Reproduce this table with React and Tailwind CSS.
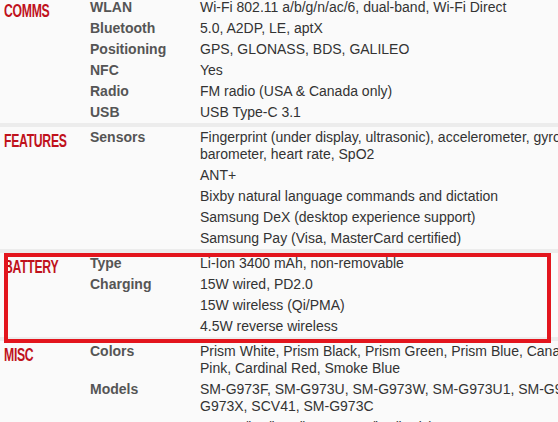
const sections = [
  {
    title: "COMMS",
    rows: [
      { label: "WLAN", lines: ["Wi-Fi 802.11 a/b/g/n/ac/6, dual-band, Wi-Fi Direct"] },
      { label: "Bluetooth", lines: ["5.0, A2DP, LE, aptX"] },
      { label: "Positioning", lines: ["GPS, GLONASS, BDS, GALILEO"] },
      { label: "NFC", lines: ["Yes"] },
      { label: "Radio", lines: ["FM radio (USA & Canada only)"] },
      { label: "USB", lines: ["USB Type-C 3.1"] }
    ]
  },
  {
    title: "FEATURES",
    rows: [
      { label: "Sensors", lines: ["Fingerprint (under display, ultrasonic), accelerometer, gyro,", "barometer, heart rate, SpO2"] },
      { label: "", lines: ["ANT+"] },
      { label: "", lines: ["Bixby natural language commands and dictation"] },
      { label: "", lines: ["Samsung DeX (desktop experience support)"] },
      { label: "", lines: ["Samsung Pay (Visa, MasterCard certified)"] }
    ]
  },
  {
    title: "BATTERY",
    rows: [
      { label: "Type", lines: ["Li-Ion 3400 mAh, non-removable"] },
      { label: "Charging", lines: ["15W wired, PD2.0"] },
      { label: "", lines: ["15W wireless (Qi/PMA)"] },
      { label: "", lines: ["4.5W reverse wireless"] }
    ]
  },
  {
    title: "MISC",
    rows: [
      { label: "Colors", lines: ["Prism White, Prism Black, Prism Green, Prism Blue, Canary Yellow, Flamingo", "Pink, Cardinal Red, Smoke Blue"] },
      { label: "Models", lines: ["SM-G973F, SM-G973U, SM-G973W, SM-G973U1, SM-G9730, SM-G973N, SM-", "G973X, SCV41, SM-G973C"] },
      { label: "SAR", lines: ["0.88 W/kg (head)     0.78 W/kg (body)"] }
    ]
  }
];

function Section({ section, first }) {
  return (
    <div className={`flex ${first ? "" : "border-t-4 border-[#ececec]"}`}>
      <div className="w-[90px] shrink-0 pl-[4px] pt-[5px]">
        <span
          className="inline-block origin-left scale-x-[0.68] text-[18px] leading-[18px] font-semibold text-[#c0121c] tracking-tight"
          style={{ fontFamily: '"Liberation Sans", Arial, sans-serif' }}
        >
          {section.title}
        </span>
      </div>
      <div className="flex-1">
        {section.rows.map((row, i) => (
          <div className="flex py-[2px]" key={i}>
            <div className="w-[110px] shrink-0 font-bold text-[#555] leading-[17px]">{row.label}</div>
            <div className="text-[#333] leading-[17px] whitespace-nowrap">
              {row.lines.map((line, j) => (
                <div key={j} className="whitespace-pre">{line}</div>
              ))}
            </div>
          </div>
        ))}
      </div>
    </div>
  );
}

export default function App() {
  return (
    <div
      className="relative w-[558px] h-[422px] overflow-hidden bg-[#fafafa] text-[14px]"
      style={{ fontFamily: '"Liberation Sans", Arial, sans-serif' }}
    >
      <div className="-mt-[3px]">
        {sections.map((s, i) => (
          <Section key={s.title} section={s} first={i === 0} />
        ))}
      </div>
      <div className="absolute left-[4px] top-[253px] w-[547px] h-[90px] border-4 border-[#e3151d]" />
    </div>
  );
}
